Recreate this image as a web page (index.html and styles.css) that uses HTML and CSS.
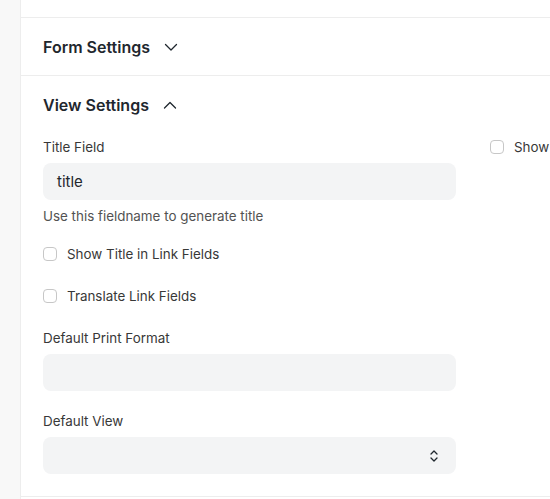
FILE: index.html
```html
<!DOCTYPE html>
<html>
<head>
<meta charset="utf-8">
<link rel="stylesheet" href="styles.css">
</head>
<body>
<div class="page">
  <aside class="rail"></aside>
  <main class="card">
    <div class="top"></div>
    <section class="section">
      <div class="head">
        <span class="head-title">Form Settings</span>
        <svg class="chev" width="14" height="14" viewBox="0 0 14 14"><path d="M1.5 4.5 L7 10 L12.5 4.5" fill="none" stroke="#1f272e" stroke-width="1.3" stroke-linecap="round" stroke-linejoin="round"/></svg>
      </div>
    </section>
    <section class="section">
      <div class="head">
        <span class="head-title">View Settings</span>
        <svg class="chev" width="14" height="14" viewBox="0 0 14 14"><path d="M1.5 10 L7 4.5 L12.5 10" fill="none" stroke="#1f272e" stroke-width="1.3" stroke-linecap="round" stroke-linejoin="round"/></svg>
      </div>
      <div class="body">
        <div class="col">
          <label class="label">Title Field</label>
          <div class="input">title</div>
          <p class="help">Use this fieldname to generate title</p>
          <div class="check first"><span class="box"></span><span>Show Title in Link Fields</span></div>
          <div class="check"><span class="box"></span><span>Translate Link Fields</span></div>
          <label class="label spaced">Default Print Format</label>
          <div class="input"></div>
          <label class="label spaced2">Default View</label>
          <div class="input select">
            <svg width="10" height="16" viewBox="0 0 10 16"><path d="M2 6 L5 3 L8 6" fill="none" stroke="#1f272e" stroke-width="1.3" stroke-linecap="round" stroke-linejoin="round"/><path d="M2 10 L5 13 L8 10" fill="none" stroke="#1f272e" stroke-width="1.3" stroke-linecap="round" stroke-linejoin="round"/></svg>
          </div>
        </div>
        <div class="col">
          <div class="check right"><span class="box"></span><span>Show</span></div>
        </div>
      </div>
    </section>
  </main>
</div>
</body>
</html>
```
FILE: styles.css
```css
html, body {
  margin: 0;
  padding: 0;
  background: #ffffff;
}
body {
  font-family: Inter, "Noto Sans", sans-serif;
  color: #1f272e;
  overflow: hidden;
}
.page {
  display: flex;
  height: 499px;
}
.rail {
  width: 20px;
  flex: none;
  background: #f8f8f8;
  border-right: 1px solid #ededed;
}
.card {
  flex: 1;
  min-width: 0;
  background: #fff;
  overflow: hidden;
}
.top {
  height: 17px;
  border-bottom: 1px solid #ededed;
}
.section {
  border-bottom: 1px solid #ededed;
}
.head {
  height: 57px;
  display: flex;
  align-items: center;
  padding-left: 22px;
  gap: 14px;
}
.head-title {
  font-size: 16px;
  font-weight: 600;
  color: #1f272e;
}
.chev {
  display: block;
}
.body {
  display: grid;
  grid-template-columns: 413px 413px;
  column-gap: 34px;
  padding: 5px 0 22px 22px;
}
.col {
  display: flex;
  flex-direction: column;
}
.label {
  font-size: 13.4px;
  line-height: 18px;
  color: #383838;
  margin-bottom: 7px;
}
.label.spaced {
  margin-top: 24px;
}
.label.spaced2 {
  margin-top: 21px;
}
.input {
  height: 37px;
  box-sizing: border-box;
  background: #f3f4f5;
  border-radius: 8px;
  padding: 0 14px;
  display: flex;
  align-items: center;
  font-size: 15px;
  color: #1f272e;
}
.select {
  justify-content: flex-end;
  padding-right: 17px;
}
.select svg {
  display: block;
}
.help {
  margin: 7px 0 0;
  font-size: 13.4px;
  line-height: 18px;
  color: #525252;
}
.check {
  display: flex;
  align-items: center;
  gap: 10px;
  height: 18px;
  margin-top: 24px;
  font-size: 13.4px;
  color: #383838;
}
.check.first {
  margin-top: 20px;
}
.check.right {
  margin-top: 0;
}
.box {
  width: 14px;
  height: 14px;
  box-sizing: border-box;
  border: 1px solid #c7c7c7;
  border-radius: 4px;
  background: #fff;
  flex: none;
}
```
